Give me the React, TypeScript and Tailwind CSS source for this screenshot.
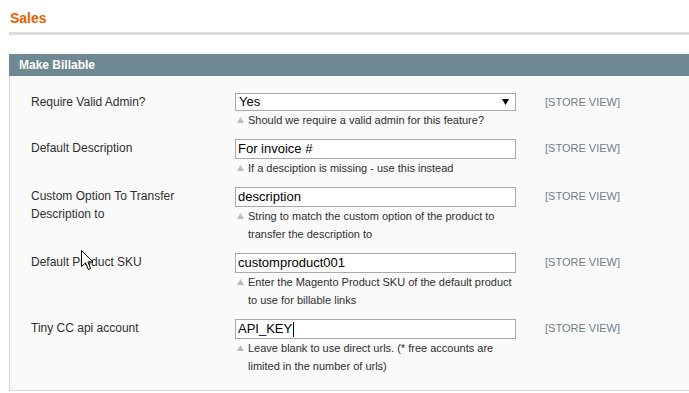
import React from "react";

type Row = {
  label: string[];
  value: string;
  hint: string[];
  select?: boolean;
  caret?: boolean;
};

const rows: Row[] = [
  {
    label: ["Require Valid Admin?"],
    value: "Yes",
    hint: ["Should we require a valid admin for this feature?"],
    select: true,
  },
  {
    label: ["Default Description"],
    value: "For invoice #",
    hint: ["If a desciption is missing - use this instead"],
  },
  {
    label: ["Custom Option To Transfer", "Description to"],
    value: "description",
    hint: [
      "String to match the custom option of the product to",
      "transfer the description to",
    ],
  },
  {
    label: ["Default Product SKU"],
    value: "customproduct001",
    hint: [
      "Enter the Magento Product SKU of the default product",
      "to use for billable links",
    ],
  },
  {
    label: ["Tiny CC api account"],
    value: "API_KEY",
    hint: [
      "Leave blank to use direct urls. (* free accounts are",
      "limited in the number of urls)",
    ],
    caret: true,
  },
];

const HintArrow = () => (
  <svg width="7" height="6" viewBox="0 0 7 6" className="absolute left-[2px] top-[6px]">
    <path d="M3.5 0 L7 6 L0 6 Z" fill="#b4bec3" />
  </svg>
);

const Cursor = () => (
  <svg
    width="14"
    height="22"
    viewBox="0 0 14 22"
    className="absolute left-[81px] top-[250px] pointer-events-none"
  >
    <path
      d="M0.5 0.5 L0.5 16.5 L4.5 12.8 L7.3 19.5 L9.6 18.5 L6.9 11.9 L12 11.9 Z"
      fill="#fff"
      stroke="#000"
      strokeWidth="1"
      strokeLinejoin="round"
    />
  </svg>
);

const App: React.FC = () => {
  return (
    <div
      className="relative w-[689px] h-[393px] overflow-hidden bg-white text-[#2f2f2f]"
      style={{ fontFamily: '"Liberation Sans", Arial, sans-serif' }}
    >
      {/* Section title */}
      <div className="pl-[10px] pt-[9px]">
        <h3 className="text-[14px] leading-[18px] font-bold text-[#eb5e00]">Sales</h3>
      </div>
      <div className="ml-[9px] mt-[5px] h-[3px] bg-[#dddddd]" />

      {/* Fieldset */}
      <div className="ml-[9px] mt-[19px]">
        <div className="h-[22px] bg-[#6f8992] pl-[10px] text-[12px] leading-[22px] font-bold text-white">
          Make Billable
        </div>
        <div className="bg-[#fafafa] border-l border-b border-[#d6d6d6] pt-[17px] pb-[5px]">
          {rows.map((row, i) => (
            <div key={i} className="flex pb-[10px]">
              <div className="w-[225px] shrink-0 pl-[21px] text-[12px] leading-[18px]">
                {row.label.map((l, j) => (
                  <div key={j}>{l}</div>
                ))}
              </div>
              <div className="w-[281px] shrink-0">
                {row.select ? (
                  <div className="flex h-[18px] items-center justify-between border border-[#aaaaaa] bg-white pl-[3px] pr-[6px] text-[13px] text-black">
                    <span>{row.value}</span>
                    <svg width="7" height="6" viewBox="0 0 7 6">
                      <path d="M0 0 L7 0 L3.5 6 Z" fill="#000" />
                    </svg>
                  </div>
                ) : (
                  <div className="flex h-[20px] items-center border border-[#aaaaaa] bg-white pl-[2px] text-[13px] text-black">
                    <span>{row.value}</span>
                    {row.caret && <span className="ml-[1px] inline-block h-[15px] w-px bg-black" />}
                  </div>
                )}
                <div className="relative pl-[13px] text-[11px] leading-[18px] text-[#2f2f2f]">
                  <HintArrow />
                  {row.hint.map((h, j) => (
                    <div key={j}>{h}</div>
                  ))}
                </div>
              </div>
              <div className="pl-[29px] text-[11px] leading-[18px] text-[#6e808a]">[STORE VIEW]</div>
            </div>
          ))}
        </div>
      </div>

      <Cursor />
    </div>
  );
};

export default App;
